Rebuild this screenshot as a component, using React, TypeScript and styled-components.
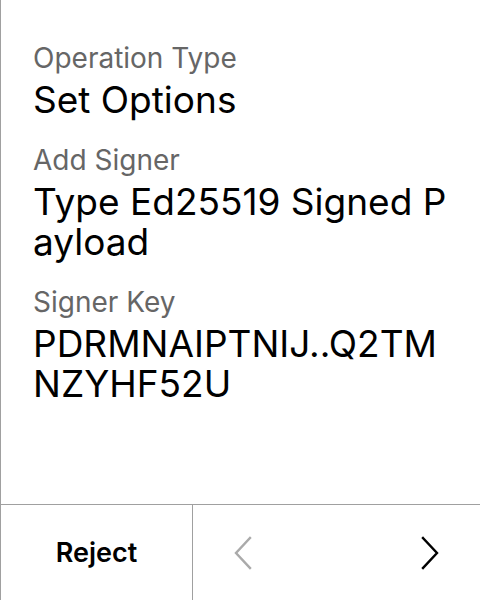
import React from "react";
import styled, { createGlobalStyle } from "styled-components";

const GlobalStyle = createGlobalStyle`
    html, body {
        margin: 0;
        padding: 0;
        background: #ffffff;
    }
    body {
        font-family: Inter, "Noto Sans", sans-serif;
        -webkit-font-smoothing: antialiased;
    }
`;

const Screen = styled.div`
    width: 480px;
    height: 600px;
    box-sizing: border-box;
    border-left: 1px solid #a0a0a0;
    display: flex;
    flex-direction: column;
    background: #ffffff;
`;

const Content = styled.div`
    flex: 1;
    display: flex;
    flex-direction: column;
    gap: 23px;
    padding: 41px 24px 0 32px;
`;

const Field = styled.div`
    display: flex;
    flex-direction: column;
    gap: 5px;
`;

const Label = styled.div`
    font-size: 28px;
    line-height: 34px;
    color: #666666;
`;

const Value = styled.div`
    font-size: 37px;
    line-height: 40px;
    color: #000000;
    word-break: break-all;
`;

const Footer = styled.div`
    height: 96px;
    box-sizing: border-box;
    border-top: 1px solid #a0a0a0;
    display: flex;
`;

const RejectButton = styled.button`
    width: 192px;
    border: none;
    border-right: 1px solid #a0a0a0;
    background: none;
    font-family: inherit;
    font-size: 27px;
    font-weight: 600;
    color: #000000;
    padding: 0;
`;

const Nav = styled.div`
    flex: 1;
    display: flex;
    align-items: center;
    justify-content: space-between;
    padding: 0 40px 0 40px;
`;

const NavButton = styled.button<{ disabled?: boolean }>`
    border: none;
    background: none;
    padding: 0;
    display: flex;
    color: ${({ disabled }) => (disabled ? "#aaaaaa" : "#000000")};
`;

const Chevron: React.FC<{ dir: "left" | "right" }> = ({ dir }) => (
    <svg width="20" height="34" viewBox="0 0 20 34" fill="none">
        <path
            d={dir === "left" ? "M17 2 L3 17 L17 32" : "M3 2 L17 17 L3 32"}
            stroke="currentColor"
            strokeWidth="2.4"
            strokeLinecap="square"
        />
    </svg>
);

const fields = [
    { label: "Operation Type", value: "Set Options" },
    { label: "Add Signer", value: "Type Ed25519 Signed Payload" },
    { label: "Signer Key", value: "PDRMNAIPTNIJ..Q2TMNZYHF52U" },
];

const App: React.FC = () => (
    <>
        <GlobalStyle />
        <Screen>
            <Content>
                {fields.map((f) => (
                    <Field key={f.label}>
                        <Label>{f.label}</Label>
                        <Value>{f.value}</Value>
                    </Field>
                ))}
            </Content>
            <Footer>
                <RejectButton>Reject</RejectButton>
                <Nav>
                    <NavButton disabled>
                        <Chevron dir="left" />
                    </NavButton>
                    <NavButton>
                        <Chevron dir="right" />
                    </NavButton>
                </Nav>
            </Footer>
        </Screen>
    </>
);

export default App;
